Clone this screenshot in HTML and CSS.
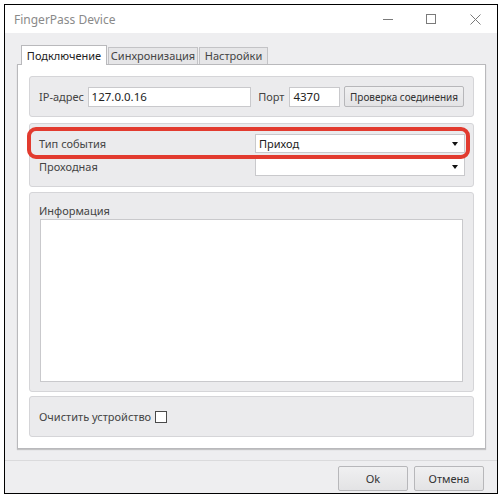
FILE: index.html
```html
<!DOCTYPE html>
<html lang="ru">
  <head>
    <meta charset="UTF-8" />
    <title>FingerPass Device</title>
    <link rel="stylesheet" href="styles.css">
  </head>
  <body>
    <div class="window">
      <!-- ========== TITLE BAR ========== -->
      <div class="titlebar">
        <span class="title">FingerPass Device</span>
        <div class="controls">
          <svg class="ctl-min" width="10" height="10" viewBox="0 0 10 10"><path d="M0 5.5H10" stroke="#7a7a7a" stroke-width="1" /></svg>
          <svg class="ctl-max" width="10" height="10" viewBox="0 0 10 10"><rect x="0.5" y="0.5" width="9" height="9" fill="none" stroke="#7a7a7a" stroke-width="1" /></svg>
          <svg class="ctl-close" width="11" height="11" viewBox="0 0 11 11"><path d="M0.5 0.5L10.5 10.5M10.5 0.5L0.5 10.5" stroke="#7a7a7a" stroke-width="1" /></svg>
        </div>
      </div>

      <!-- ========== CONTENT ========== -->
      <div class="content">
        <div class="tabs">
          <div class="tab active">Подключение</div>
          <div class="tab tab-sync">Синхронизация</div>
          <div class="tab tab-settings">Настройки</div>
        </div>

        <div class="panel">
          <div class="group group-ip">
            <span class="label label-ip">IP-адрес</span>
            <div class="field field-ip">127.0.0.16</div>
            <span class="label label-port">Порт</span>
            <div class="field field-port">4370</div>
            <button class="btn btn-check">Проверка соединения</button>
          </div>

          <div class="group group-event">
            <div class="row">
              <span class="label">Тип события</span>
              <div class="combo"><span>Приход</span><i class="arrow"></i></div>
            </div>
            <div class="row">
              <span class="label">Проходная</span>
              <div class="combo"><span></span><i class="arrow"></i></div>
            </div>
            <div class="highlight"></div>
          </div>

          <div class="group group-info">
            <span class="label">Информация</span>
            <div class="memo"></div>
          </div>

          <div class="group group-clear">
            <span class="label">Очистить устройство</span>
            <span class="checkbox"></span>
          </div>
        </div>
      </div>

      <!-- ========== FOOTER ========== -->
      <div class="footer">
        <button class="btn btn-footer">Ok</button>
        <button class="btn btn-footer">Отмена</button>
      </div>
    </div>
  </body>
</html>
```

FILE: styles.css
```css
:root {
  --window-bg: #eeeef0;
  --group-bg: #ebebed;
  --group-border: #d5d5d8;
  --panel-border: #b9b9bc;
  --field-border: #c9c9cc;
  --text: #444;
}

* {
  margin: 0;
  padding: 0;
  box-sizing: border-box;
  font-family: "Noto Sans", "Open Sans", sans-serif;
}

body {
  background-color: #fff;
  color: var(--text);
  font-size: 11px;
}

.window {
  margin: 4px 0 0 4px;
  width: 494px;
  height: 490px;
  border: 1px solid #000;
  background-color: var(--window-bg);
  display: flex;
  flex-direction: column;
}

/* ========== TITLE BAR ========== */
.titlebar {
  height: 28px;
  background-color: #fff;
  display: flex;
  align-items: center;
  justify-content: space-between;
  padding-left: 9px;
}

.title {
  font-size: 12px;
  color: #8a8a8a;
}

.controls {
  display: flex;
  align-items: center;
  padding-right: 16px;
}

.ctl-min {
  margin-right: 33px;
}

.ctl-max {
  margin-right: 34px;
}

/* ========== TABS ========== */
.content {
  padding: 12px 11px 0 12px;
}

.tabs {
  display: flex;
  align-items: flex-end;
  height: 19px;
  padding-left: 4px;
  position: relative;
  z-index: 1;
}

.tab {
  height: 17px;
  line-height: 15px;
  text-align: center;
  background-color: #e6e6e8;
  border: 1px solid #c3c3c6;
  border-bottom: none;
  color: #444;
  margin-right: 1px;
}

.tab.active {
  height: 20px;
  margin-bottom: -1px;
  width: 86px;
  background-color: #fff;
  border-color: var(--panel-border);
  color: #222;
  line-height: 19px;
}

.tab-sync {
  width: 90px;
}

.tab-settings {
  width: 69px;
}

/* ========== PANEL ========== */
.panel {
  height: 385px;
  background-color: #fff;
  border: 1px solid var(--panel-border);
  box-shadow: 0 1px 1px rgba(0, 0, 0, 0.18);
  padding: 11px;
}

.group {
  background-color: var(--group-bg);
  border: 1px solid var(--group-border);
  border-radius: 3px;
}

.label {
  white-space: nowrap;
  color: var(--text);
}

.field,
.combo,
.memo {
  background-color: #fff;
  border: 1px solid var(--field-border);
}

.btn {
  height: 21px;
  padding: 0;
  white-space: nowrap;
  font-size: 11px;
  color: #333;
  background: linear-gradient(#f0f0f1, #e3e3e5);
  border: 1px solid #b7b7ba;
  border-radius: 2px;
}

/* ip row */
.group-ip {
  height: 41px;
  margin-bottom: 6px;
  display: flex;
  align-items: center;
  padding: 0 9px;
}

.label-ip {
  width: 49px;
}

.field {
  height: 20px;
  line-height: 18px;
  padding-left: 3px;
  color: #222;
  font-size: 11.5px;
}

.field-ip {
  width: 165px;
}

.label-port {
  margin: 0 5px 0 7px;
}

.field-port {
  width: 51px;
}

.btn-check {
  width: 121px;
  margin-left: 4px;
  font-size: 10px;
}

/* event rows */
.group-event {
  position: relative;
  height: 64px;
  margin-bottom: 5px;
  padding: 10px 8px 0 9px;
  display: flex;
  flex-direction: column;
  gap: 4px;
}

.row {
  display: flex;
  align-items: center;
  justify-content: space-between;
}

.combo {
  width: 210px;
  height: 19px;
  display: flex;
  align-items: center;
  justify-content: space-between;
  padding: 0 6px 0 3px;
  color: #222;
}

.arrow {
  width: 0;
  height: 0;
  border-left: 3.5px solid transparent;
  border-right: 3.5px solid transparent;
  border-top: 4px solid #111;
}

.highlight {
  position: absolute;
  left: -3px;
  top: 3px;
  width: 443px;
  height: 32px;
  border: 4px solid #e23b2f;
  border-radius: 9px;
}

/* info */
.group-info {
  height: 200px;
  margin-bottom: 4px;
  padding: 11px 9px 0 9px;
  display: flex;
  flex-direction: column;
}

.group-info .label {
  line-height: 14px;
}

.memo {
  margin: 1px 0 0 1px;
  width: 423px;
  height: 163px;
}

/* clear device */
.group-clear {
  height: 41px;
  display: flex;
  align-items: center;
  padding-left: 9px;
}

.checkbox {
  width: 12px;
  height: 12px;
  margin-left: 4px;
  background-color: #fff;
  border: 1px solid #4a4a4a;
}

/* ========== FOOTER ========== */
.footer {
  margin-top: 11px;
  border-top: 1px solid #dadadc;
  display: flex;
  justify-content: flex-end;
  gap: 6px;
  padding: 5px 13px 0 0;
}

.btn-footer {
  width: 70px;
  height: 25px;
}
```
